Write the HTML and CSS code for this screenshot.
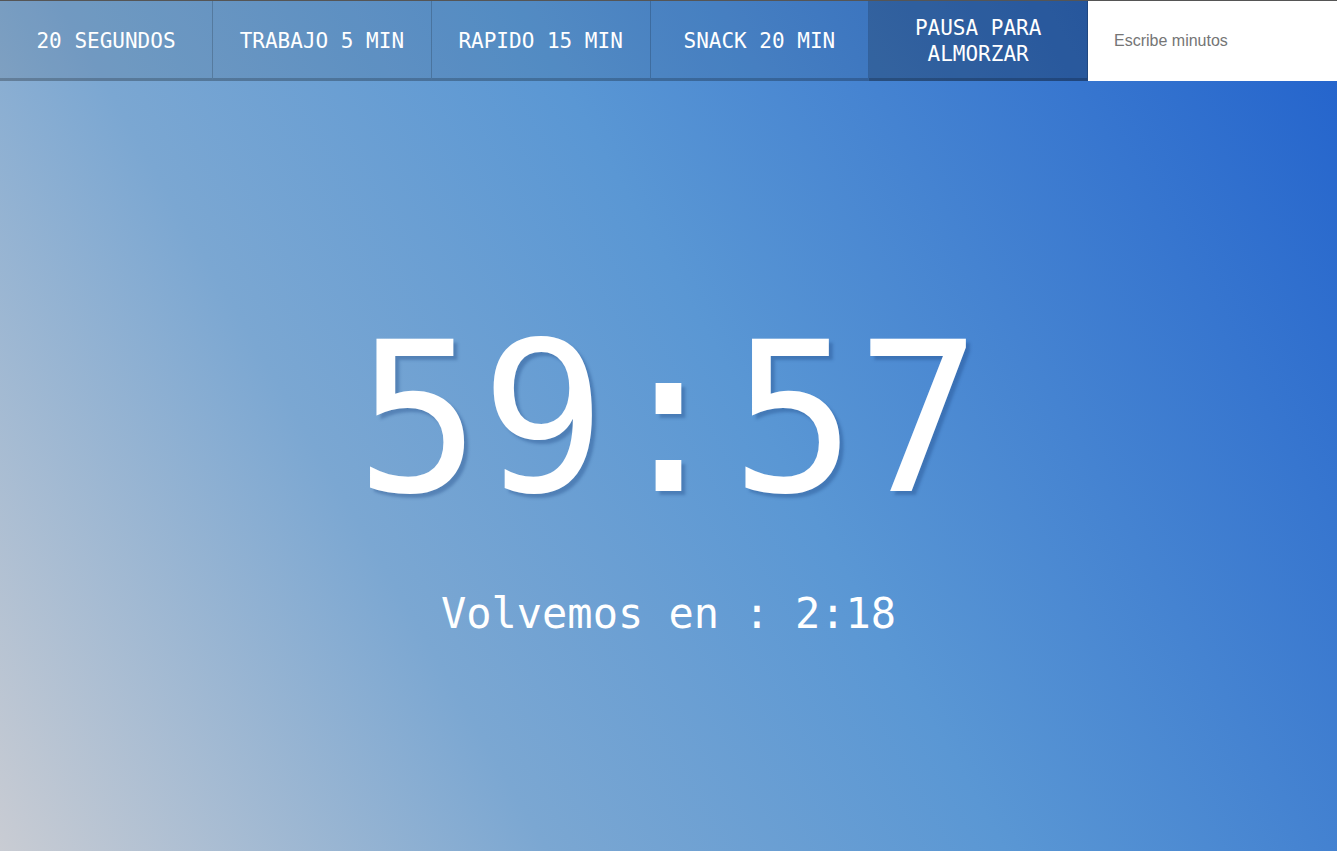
FILE: index.html
```html
<!DOCTYPE html>
<html lang="es">
<head>
<meta charset="utf-8">
<title>Temporizador</title>
<link rel="stylesheet" href="styles.css">
</head>
<body>
<nav class="timer-nav">
  <button class="preset preset-first">20 SEGUNDOS</button>
  <button class="preset">TRABAJO 5 MIN</button>
  <button class="preset">RAPIDO 15 MIN</button>
  <button class="preset">SNACK 20 MIN</button>
  <button class="preset preset-active">PAUSA PARA ALMORZAR</button>
  <form class="custom-form">
    <input class="custom-input" type="text" placeholder="Escribe minutos">
  </form>
</nav>
<main class="display">
  <h1 class="clock">59:57</h1>
  <p class="end-time">Volvemos en : 2:18</p>
</main>
</body>
</html>
```

FILE: styles.css
```css
html, body {
  margin: 0;
  padding: 0;
  height: 100%;
}

body {
  min-height: 100vh;
  background: linear-gradient(60deg, #c9ccd3 0%, #7ba7d2 30%, #5a97d4 55%, #2262cc 100%);
  font-family: "DejaVu Sans Mono", "Liberation Mono", monospace;
  color: #fff;
  overflow: hidden;
}

.timer-nav {
  display: flex;
  border-top: 1px solid #555;
  height: 80px;
}

.preset {
  flex: 0 0 218.75px;
  box-sizing: border-box;
  height: 80px;
  margin: 0;
  padding: 2px 12px 0;
  background: rgba(0, 0, 0, 0.08);
  border: 0;
  border-right: 1px solid rgba(0, 0, 0, 0.18);
  border-bottom: 3px solid rgba(0, 0, 0, 0.2);
  color: #fff;
  font-family: "DejaVu Sans Mono", "Liberation Mono", monospace;
  font-size: 21px;
  line-height: 26px;
  text-align: center;
}

.preset-first {
  flex-basis: 213px;
}

.preset-active {
  background: rgba(0, 0, 0, 0.24);
}

.custom-form {
  flex: 1 1 auto;
  display: flex;
  margin: 0;
}

.custom-input {
  flex: 1 1 auto;
  box-sizing: border-box;
  height: 80px;
  margin: 0;
  border: 0;
  padding: 0 0 0 26px;
  background: #fff;
  font-family: "Liberation Sans", Arial, sans-serif;
  font-size: 16px;
  color: #333;
  outline: none;
}

.custom-input::placeholder {
  color: #757575;
}

.display {
  display: flex;
  flex-direction: column;
  align-items: center;
  padding-top: 234px;
}

.clock {
  margin: 0;
  font-size: 208px;
  line-height: 1;
  font-weight: normal;
  text-shadow: 4px 4px 3px rgba(30, 70, 130, 0.35);
}

.end-time {
  margin: 70px 0 0;
  font-size: 42px;
  line-height: 1;
}
```
